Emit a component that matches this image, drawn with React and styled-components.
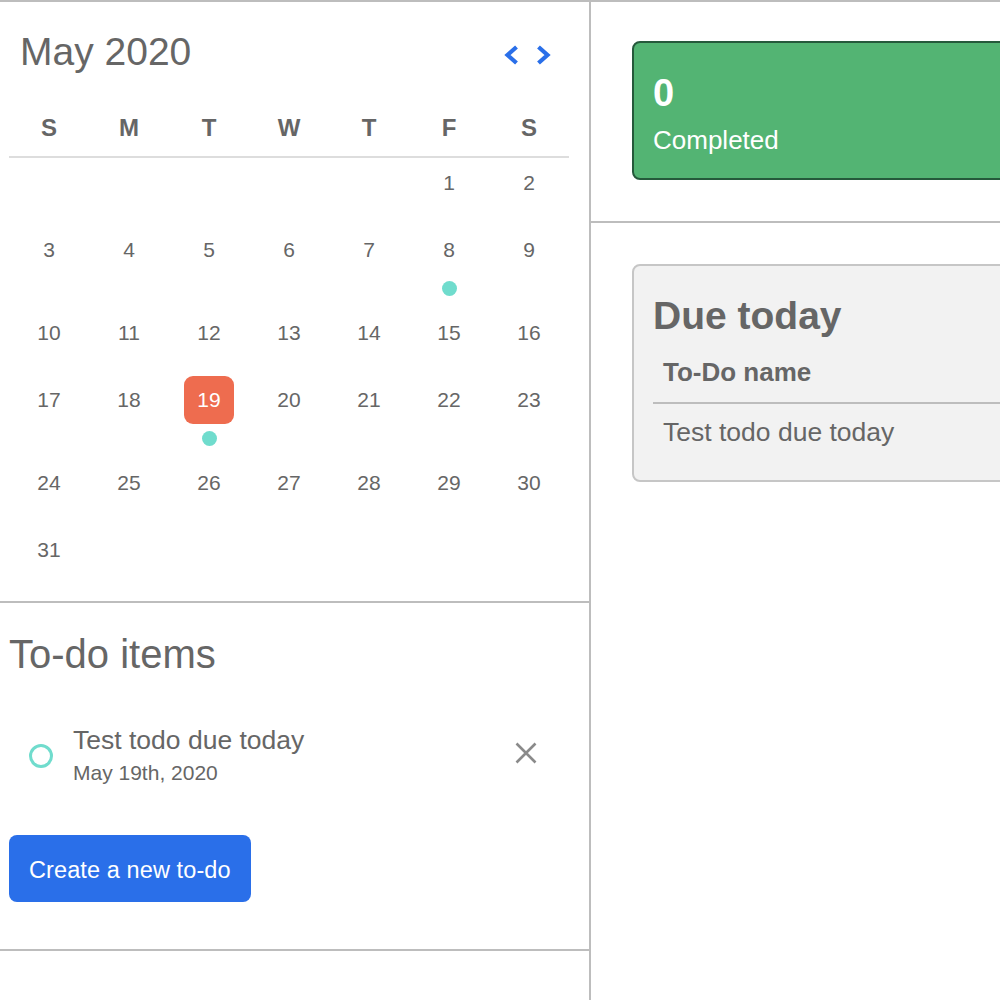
import React from "react";
import styled, { createGlobalStyle } from "styled-components";

const GlobalStyle = createGlobalStyle`
  html, body {
    margin: 0;
    padding: 0;
    overflow: hidden;
    background: #ffffff;
  }
  body {
    font-family: "Liberation Sans", Arial, Helvetica, sans-serif;
    color: #666666;
  }
`;

const Page = styled.div`
  display: flex;
  width: 100%;
  min-height: 1000px;
  border-top: 2px solid #bdbdbd;
`;

const LeftColumn = styled.aside`
  width: 589px;
  flex: none;
  border-right: 2px solid #bdbdbd;
`;

const RightColumn = styled.main`
  flex: 1;
  min-width: 0;
  overflow: hidden;
  display: flex;
  flex-direction: column;
`;

const CalendarSection = styled.section`
  padding: 22px 20px 27px 9px;
  border-bottom: 2px solid #bdbdbd;
`;

const CalendarHeader = styled.div`
  display: flex;
  align-items: center;
  justify-content: space-between;
  height: 56px;
  padding: 0 17px 0 11px;
`;

const Title = styled.h2`
  margin: 0;
  font-size: ${(p) => p.$size || "39px"};
  line-height: 46px;
  font-weight: 400;
  color: #666666;
`;

const NavGroup = styled.div`
  display: flex;
  align-items: center;
  gap: 17px;
  margin-top: 6px;
`;

const NavButton = styled.button`
  border: none;
  background: none;
  padding: 0;
  width: 16px;
  height: 22px;
  display: flex;
  cursor: pointer;
`;

const WeekRow = styled.div`
  display: grid;
  grid-template-columns: repeat(7, 80px);
  margin-top: 33px;
  padding-bottom: 13px;
  border-bottom: 2px solid #dddddd;
`;

const WeekDay = styled.div`
  text-align: center;
  font-size: 24px;
  line-height: 30px;
  font-weight: 700;
  color: #666666;
`;

const DaysGrid = styled.div`
  display: grid;
  grid-template-columns: repeat(7, 80px);
  row-gap: 19px;
  margin-top: 1px;
  align-items: start;
`;

const DayCell = styled.div`
  display: flex;
  flex-direction: column;
  align-items: center;
`;

const DayNumber = styled.div`
  width: 50px;
  height: 48px;
  border-radius: 9px;
  display: flex;
  align-items: center;
  justify-content: center;
  font-size: 21px;
  color: ${(p) => (p.$today ? "#ffffff" : "#666666")};
  background: ${(p) => (p.$today ? "#ee6c4f" : "transparent")};
`;

const EventDot = styled.span`
  width: 15px;
  height: 15px;
  border-radius: 50%;
  background: #70dccd;
  margin-top: 7px;
  margin-bottom: -6px;
`;

const TodoSection = styled.section`
  padding: 28px 20px 47px 9px;
  border-bottom: 2px solid #bdbdbd;
`;

const TodoList = styled.ul`
  list-style: none;
  margin: 48px 0 0;
  padding: 0;
`;

const TodoItem = styled.li`
  display: flex;
  align-items: center;
  padding: 0 32px 0 20px;
`;

const StatusRing = styled.span`
  width: 24px;
  height: 24px;
  box-sizing: border-box;
  border: 3px solid #70dccd;
  border-radius: 50%;
  flex: none;
`;

const TodoText = styled.div`
  flex: 1;
  margin-left: 20px;
  display: flex;
  flex-direction: column;
`;

const TodoName = styled.span`
  font-size: 26.5px;
  line-height: 30px;
  color: #666666;
`;

const TodoDate = styled.span`
  margin-top: 5px;
  font-size: 21px;
  line-height: 26px;
  color: #666666;
`;

const RemoveButton = styled.button`
  border: none;
  background: none;
  padding: 0;
  width: 22px;
  height: 22px;
  display: flex;
  margin-top: -6px;
  cursor: pointer;
`;

const CreateButton = styled.button`
  margin-top: 49px;
  height: 67px;
  padding: 4px 20px 0;
  border: none;
  border-radius: 8px;
  background: #2a6fe9;
  color: #ffffff;
  font-family: inherit;
  font-size: 23.5px;
  letter-spacing: 0.1px;
  cursor: pointer;
`;

const StatsSection = styled.section`
  padding: 39px 0 41px 41px;
  border-bottom: 2px solid #bdbdbd;
`;

const StatCard = styled.div`
  width: 700px;
  border: 2px solid #25593b;
  border-radius: 8px;
  background: #53b473;
  padding: 28px 19px 23px;
  color: #ffffff;
`;

const StatValue = styled.div`
  font-size: 38px;
  line-height: 44px;
  font-weight: 700;
`;

const StatLabel = styled.div`
  margin-top: 10px;
  font-size: 26px;
  line-height: 30px;
`;

const DueSection = styled.section`
  padding: 41px 0 41px 41px;
`;

const DueCard = styled.div`
  width: 700px;
  border: 2px solid #c6c6c6;
  border-radius: 8px;
  background: #f2f2f2;
  padding: 27px 0 33px 19px;
`;

const DueTitle = styled.h2`
  margin: 0;
  font-size: 39px;
  line-height: 46px;
  font-weight: 700;
  color: #666666;
`;

const DueTable = styled.table`
  width: 100%;
  border-collapse: collapse;
`;

const HeadCell = styled.th`
  text-align: left;
  padding: 18px 10px 15px;
  font-size: 26px;
  line-height: 30px;
  font-weight: 700;
  color: #666666;
  border-bottom: 2px solid #bdbdbd;
`;

const BodyCell = styled.td`
  padding: 13px 10px 0;
  font-size: 26.5px;
  line-height: 30px;
  color: #666666;
`;

const Chevron = ({ dir }) => (
  <svg width="16" height="22" viewBox="0 0 16 22" fill="none">
    <path
      d={dir === "left" ? "M13.5 3 L4.5 11 L13.5 19" : "M2.5 3 L11.5 11 L2.5 19"}
      stroke="#2a6fe9"
      strokeWidth="4.2"
      strokeLinecap="butt"
      strokeLinejoin="miter"
    />
  </svg>
);

const CloseIcon = () => (
  <svg width="22" height="22" viewBox="0 0 22 22" fill="none">
    <path d="M1.5 1.5 L20.5 20.5 M20.5 1.5 L1.5 20.5" stroke="#8a8a8a" strokeWidth="2.6" />
  </svg>
);

const weekDays = ["S", "M", "T", "W", "T", "F", "S"];
const events = new Set([8, 19]);
const today = 19;

const cells = [
  ...Array.from({ length: 5 }, () => null),
  ...Array.from({ length: 31 }, (_, i) => i + 1),
];

export default function App() {
  return (
    <>
      <GlobalStyle />
      <Page>
        <LeftColumn>
          <CalendarSection>
            <CalendarHeader>
              <Title>May 2020</Title>
              <NavGroup>
                <NavButton aria-label="Previous month">
                  <Chevron dir="left" />
                </NavButton>
                <NavButton aria-label="Next month">
                  <Chevron dir="right" />
                </NavButton>
              </NavGroup>
            </CalendarHeader>
            <WeekRow>
              {weekDays.map((d, i) => (
                <WeekDay key={i}>{d}</WeekDay>
              ))}
            </WeekRow>
            <DaysGrid>
              {cells.map((d, i) => (
                <DayCell key={i}>
                  {d && <DayNumber $today={d === today}>{d}</DayNumber>}
                  {d && events.has(d) && <EventDot />}
                </DayCell>
              ))}
            </DaysGrid>
          </CalendarSection>
          <TodoSection>
            <Title $size="40px">To-do items</Title>
            <TodoList>
              <TodoItem>
                <StatusRing />
                <TodoText>
                  <TodoName>Test todo due today</TodoName>
                  <TodoDate>May 19th, 2020</TodoDate>
                </TodoText>
                <RemoveButton aria-label="Remove">
                  <CloseIcon />
                </RemoveButton>
              </TodoItem>
            </TodoList>
            <CreateButton>Create a new to-do</CreateButton>
          </TodoSection>
        </LeftColumn>
        <RightColumn>
          <StatsSection>
            <StatCard>
              <StatValue>0</StatValue>
              <StatLabel>Completed</StatLabel>
            </StatCard>
          </StatsSection>
          <DueSection>
            <DueCard>
              <DueTitle>Due today</DueTitle>
              <DueTable>
                <thead>
                  <tr>
                    <HeadCell>To-Do name</HeadCell>
                  </tr>
                </thead>
                <tbody>
                  <tr>
                    <BodyCell>Test todo due today</BodyCell>
                  </tr>
                </tbody>
              </DueTable>
            </DueCard>
          </DueSection>
        </RightColumn>
      </Page>
    </>
  );
}
